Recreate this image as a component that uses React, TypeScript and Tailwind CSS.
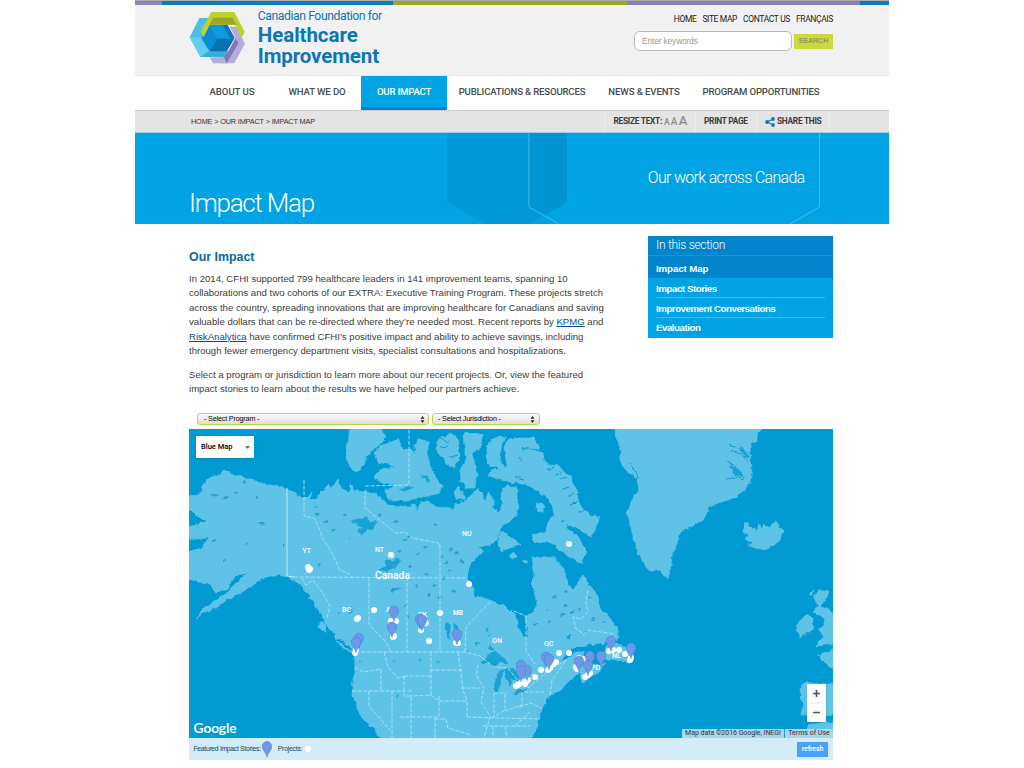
import React from "react";

const land = [
  "189,497 196,496 202,492 201,485 211,477 219,475 224,470 231,474 241,477 252,480 266,484 276,485 286,489 296,493 304,498 309,495 312,492 309,500 316,498 322,491 329,484 331,490 338,479 342,488 349,492 351,484 354,491 366,490 371,494 376,493 382,500 389,505 402,507 415,505 417,514 420,503 427,501 437,507 450,508 455,511 455,503 460,505 463,500 472,495 477,489 482,492 485,503 488,493 493,497 493,507 498,514 503,503 501,497 503,488 508,486 517,488 517,498 519,508 515,517 510,522 502,525 500,530 497,540 490,545 478,547 483,550 480,555 472,562 468,572 467,578 472,587 475,597 490,600 507,607 515,615 517,623 523,637 528,637 527,627 525,618 533,613 537,605 535,595 532,585 535,575 532,558 543,557 555,558 563,568 567,582 572,590 578,585 582,577 584,574 587,582 592,588 597,597 600,607 608,617 617,627 619,637 612,641 600,643 587,645 573,647 567,653 560,662 567,659 577,653 583,653 585,661 591,664 601,665 607,662 602,669 587,680 582,682 580,673 570,680 563,687 550,695 542,708 539,715 538,725 527,745 384,745 376,730 362,718 354,700 352,687 355,667 354,653 349,645 336,638 329,627 321,615 314,603 306,592 299,583 287,577 279,575 266,577 256,583 246,589 238,594 225,601 218,607 207,611 195,619 207,606 218,599 228,592 239,581 248,572 235,577 226,590 216,592 209,583 199,582 183,577 183,553 202,548 209,538 183,540 183,528 196,525 207,522 196,515 183,502",
  "351,422 346,458 350,466 356,472 364,465 368,454 378,446 386,438 380,422",
  "389,443 382,445 374,453 378,462 388,464 396,467 380,470 374,478 384,484 396,484 386,489 387,498 394,501 409,500 420,498 440,493 443,487 435,475 428,462 428,442 420,438 415,444 415,455 411,449 403,449 398,439",
  "436,445 443,437 450,433 458,438 460,455 455,468 450,466 443,458 436,449",
  "463,433 483,434 480,448 472,453 474,461 477,475 475,488 466,488 461,481 460,470 467,458 464,445",
  "491,441 498,436 506,437 501,448 500,462 505,468 507,462 504,448 507,441 513,438 521,439 523,450 533,450 542,453 549,465 559,466 564,471 569,476 573,483 577,489 578,500 582,508 588,512 591,516 599,518 596,528 591,537 580,530 567,524 566,528 575,534 585,548 586,554 581,563 570,558 561,551 550,542 535,542 532,535 546,532 548,522 554,515 552,505 545,496 533,488 523,483 508,482 497,479 488,475 491,470 500,469 488,464 486,455 488,445",
  "522,438 534,438 539,449 525,448 521,443",
  "454,492 459,486 464,498 457,500",
  "500,533 507,533 512,539 521,545 510,547 502,552 498,546",
  "536,505 541,502 545,507 542,513 537,511",
  "510,555 515,553 517,557 512,559",
  "524,559 527,560 527,564 524,563",
  "614,420 765,420 762,429 757,434 757,440 750,445 751,478 750,483 742,492 733,498 720,503 710,507 702,520 690,528 680,532 677,544 672,555 671,565 668,579 663,575 659,569 653,571 647,570 638,552 633,535 627,515 632,500 639,490 637,478 627,471 622,465 620,450",
  "743,532 746,522 751,527 756,530 758,524 761,529 765,524 769,528 771,524 777,522 783,532 778,543 765,550 757,548 748,546 752,541 745,539 750,535",
  "797,632 799,621 807,613 813,618 812,630 800,637",
  "818,590 829,590 825,600 821,607 829,609 840,623 840,643 817,646 819,641 824,637 818,628 824,626 824,618 814,611 819,605 813,598",
  "818,655 840,648 840,674 828,665",
  "802,685 806,683 840,685 840,714 820,717 802,714 804,704 800,698",
  "810,725 820,722 840,724 840,745 800,745",
  "603,652 608,647 607,641 613,639 619,645 630,649 634,657 629,664 623,660 616,661 605,658",
  "319,621 326,624 325,632 319,628",
  "336,641 344,645 350,651 343,648",
  "810,593 813,590 811,597",
];

const lakes = [
  "349,522 356,520 362,519 367,516 369,522 377,521 373,528 367,530 363,535 358,533 362,526",
  "379,571 386,566 386,559 392,562 398,557 400,562 392,569 384,572",
  "445,625 448,621 452,628 449,635 451,641 447,637",
  "453,622 457,626 458,636 462,643 458,645 455,636",
  "480,663 486,658 488,654 495,652 506,658 507,664 500,662 494,666 489,663",
  "494,685 497,674 506,669 501,677 499,692 495,693",
  "504,669 514,668 519,676 519,682 512,679 510,687 507,681",
  "512,693 519,690 528,688 522,693 514,695",
  "390,590 396,587 401,588 394,592",
  "488,648 492,646 494,650 491,651",
  "566,637 570,634 571,640",
  "398,489 409,486 415,488 403,492",
  "420,474 431,480 427,483",
  "728,465 738,468 745,478 736,476",
  "740,446 748,452 750,460 743,454",
];

const lakeSpots = [
  [214, 495, 8], [225, 497, 7], [236, 492, 4], [262, 523, 12], [256, 497, 3], [246, 543, 3],
  [224, 559, 4], [244, 481, 3], [284, 545, 3], [214, 540, 4], [315, 508, 4], [317, 514, 5],
  [326, 521, 4], [334, 530, 6], [345, 514, 5], [350, 538, 3], [318, 564, 3], [381, 515, 5],
  [396, 520, 6], [409, 537, 4], [400, 551, 4], [405, 540, 5], [417, 553, 4], [410, 566, 4],
  [426, 547, 4], [436, 524, 3], [442, 556, 4], [451, 549, 5], [446, 563, 5], [456, 553, 4],
  [426, 573, 5], [434, 585, 5], [444, 578, 4], [454, 591, 5], [416, 586, 4], [405, 605, 3],
  [439, 596, 5], [429, 594, 4], [450, 571, 3], [462, 561, 3], [408, 617, 4], [340, 612, 4],
  [350, 611, 5], [394, 660, 3], [397, 695, 3], [420, 660, 3], [438, 661, 3], [490, 635, 4],
  [468, 651, 4], [477, 643, 5], [487, 629, 4], [536, 623, 5], [549, 621, 4], [562, 614, 7],
  [579, 609, 4], [566, 605, 4], [555, 597, 4], [548, 610, 3], [593, 618, 5], [603, 621, 4],
  [566, 591, 3], [590, 597, 4], [354, 660, 4], [359, 661, 3], [572, 612, 5], [586, 631, 4],
  [562, 521, 5],
];

const borders = [
  "304,480 304,516 314,518 319,528 323,539 331,551 340,570 349,574 353,578",
  "294,577 467,578",
  "369,577 369,624 376,632 386,642 391,652",
  "407,577 407,652",
  "440,545 440,652",
  "465,652 466,627 490,602",
  "350,652 465,652 480,656 494,667 508,668 519,682 528,688 540,678 550,670 558,665 566,660",
  "365,486 409,485 409,429",
  "365,490 365,508 396,533 405,532 412,538 438,543 440,548",
  "302,578 306,585 313,580 322,592 330,606 327,618",
  "514,611 526,616 526,651 535,664",
  "355,667 363,672 381,669 381,690",
  "384,652 388,667 398,678 407,676",
  "352,691 412,691",
  "369,691 369,706 390,730",
  "392,691 392,738",
  "404,676 404,696 411,696 411,738",
  "404,676 430,676",
  "431,652 431,695 410,696",
  "430,670 462,670",
  "430,695 439,701 467,701 467,717",
  "439,696 439,717 400,717",
  "458,652 461,673 463,690 467,701",
  "461,688 480,688",
  "435,717 435,738",
  "435,719 446,719 448,728 471,735",
  "467,717 540,719",
  "478,665 476,675 484,688 481,702 490,716 484,738",
  "494,693 494,717",
  "494,693 507,693",
  "505,694 505,710 492,718",
  "522,692 522,705 505,711",
  "524,692 544,692",
  "519,707 531,703 541,708",
  "483,726 530,726",
  "493,726 493,738",
  "505,726 507,738",
  "515,726 530,712",
  "550,695 552,680 562,666 567,659",
  "588,590 586,602 588,612 581,619 573,617 576,629 584,634 587,630 615,634",
];

const projects = [
  [308, 567], [310, 569], [309, 570], [391, 555], [469, 584], [569, 544], [357, 619], [358, 618],
  [374, 610], [356, 650], [355, 653], [391, 621], [394, 621], [396, 621], [393, 637], [394, 636],
  [421, 630], [426, 623], [429, 641], [440, 613], [456, 643], [458, 643], [541, 670], [535, 677],
  [548, 670], [550, 668], [553, 664], [556, 662], [559, 653], [569, 653], [516, 686], [519, 684],
  [522, 682], [526, 682], [528, 680], [518, 685], [525, 684], [579, 658], [576, 667], [577, 669],
  [585, 677], [588, 675], [590, 673], [583, 659], [609, 651], [613, 650], [619, 650], [625, 654],
  [630, 660], [631, 658],
];

const pins = [
  [359, 639], [356, 643], [394, 612], [392, 628], [420, 620], [422, 621], [457, 635], [521, 666],
  [527, 671], [521, 672], [546, 658], [549, 660], [590, 657], [579, 662], [588, 666], [601, 657],
  [611, 642], [631, 649],
];

const labels: [number, number, string, number][] = [
  [302.5, 552.5, "YT", 8.5], [375, 551.5, "NT", 9], [462, 535.5, "NU", 9.5], [342, 612, "BC", 9],
  [386, 612, "AB", 9], [418, 617, "SK", 9], [453, 614.5, "MB", 10], [492, 642.5, "ON", 10],
  [544, 645.5, "QC", 9.5], [612, 658, "NL", 9], [592, 670, "PEI", 8],
];

function Logo() {
  return (
    <svg viewBox="160 30 175 165" className="h-[55px] w-[58.3px] shrink-0">
      <polygon points="165,112 194,54 224,54 203,112 222,152 282,152 270,171 197,171" fill="#4cbfe8" />
      <polygon points="165,112 197,112 222,154 197,171" fill="#62cdf0" />
      <polygon points="222,154 282,154 270,171 197,171" fill="#35afdc" />
      <polygon points="225,172 268,172 282,190 235,190" fill="#b5add9" />
      <polygon points="201,114 224,74 278,74 300,114 276,154 224,154" fill="#1594da" />
      <polygon points="224,80 249,116 226,154 201,114" fill="#0c8bd0" />
      <polygon points="224,74 278,74 298,116 249,116" fill="#109ade" />
      <polygon points="249,116 298,116 276,154 226,154" fill="#0b70b2" />
      <polygon points="264,74 278,74 300,114 286,116" fill="#0b78bd" />
      <polygon points="285,80 306,80 331,131 299,190 258,190 258,171 270,171 303,114" fill="#b5add9" />
      <polygon points="282,154 303,114 311,130 276,190 268,171" fill="#8277b7" />
      <polygon points="230,36 299,36 330,95 321,113 301,74 225,74 207,112 198,94" fill="#bdd02e" />
      <polygon points="235,53 294,53 306,74 225,74" fill="#9aa821" />
    </svg>
  );
}

function Pin({ x, y }: { x: number; y: number }) {
  return (
    <path
      transform={`translate(${x} ${y})`}
      d="M0 9.600C-.7 5-4.700 3-4.700-1.200a4.700 4.700 0 0 1 9.400 0C4.700 3 .7 5 0 9.600Z"
      fill="#6b98e8"
      stroke="#5580cc"
      strokeWidth=".6"
    />
  );
}

function ImpactMap() {
  return (
    <svg viewBox="189 429 644 309" className="block h-[309px] w-[644px]">
      <defs>
        <filter id="coast" filterUnits="userSpaceOnUse" x="183" y="423" width="656" height="321" colorInterpolationFilters="sRGB">
          <feTurbulence type="fractalNoise" baseFrequency=".16" numOctaves="3" seed="4" />
          <feDisplacementMap in="SourceGraphic" scale="5" xChannelSelector="R" yChannelSelector="G" />
        </filter>
      </defs>
      <rect x="189" y="429" width="644" height="309" fill="#019ad2" />
      <g filter="url(#coast)">
        {land.map((p) => <polygon key={p} points={p} fill="#5fc3e8" stroke="#5fc3e8" strokeWidth=".8" />)}
        {lakes.map((p) => <polygon key={p} points={p} fill="#1ba2d5" />)}
        {lakeSpots.map(([x, y, w]) => (
          <path key={`${x}-${y}`} d={`M${x - w / 2} ${y + 1}l${w / 2}-2 ${w / 2} 1-${w / 2} 2Z`} fill="#259fcc" />
        ))}
        <g fill="none" stroke="#1199cc" strokeWidth="1">
          <path d="M729 445l9 3 9 6M731 451l10 3 7 7M726 461l8 4 4 8M726 478l9-1 9 3M628 462l6 6 4 9M628 474l9 5" />
          <path d="M541 462l4-4M548 470l6-3M555 475l7-3M560 480l7-2M563 489l6-2M567 496l7-3M571 505l7-3M577 513l7-2" />
          <path d="M440 438l9 5M440 447l9-1M450 457l9-2M519 456l3 5M516 477l8 2" />
        </g>
      </g>
      <path d="M287 488V576L294 577" fill="none" stroke="#c4eaf8" strokeWidth="1" />
      <g fill="none" stroke="#ade2f5" strokeWidth=".9" strokeDasharray="4 1.6">
        {borders.map((p) => <polyline key={p} points={p} />)}
      </g>
      <g fill="white" className="font-['Roboto',sans-serif] font-medium">
        {labels.map(([x, y, t, w]) => (
          <text key={t} x={x} y={y} fontSize="7.500" textLength={w} lengthAdjust="spacingAndGlyphs">{t}</text>
        ))}
        <text x="375" y="578.5" fontSize="10" textLength="35" lengthAdjust="spacingAndGlyphs">Canada</text>
      </g>
      {projects.map(([x, y]) => <circle key={`${x}-${y}`} cx={x} cy={y} r="3" fill="white" />)}
      {pins.map(([x, y]) => <Pin key={`${x}-${y}`} x={x} y={y} />)}
      <text x="193.500" y="733" fontSize="14" fill="white" stroke="white" strokeWidth=".2" textLength="43" lengthAdjust="spacingAndGlyphs" className="font-['Lato',sans-serif] font-medium">Google</text>
    </svg>
  );
}

function Arrows() {
  return (
    <svg viewBox="0 0 5 8" className="h-[7px] w-[5px]">
      <path d="M2.5 0 4.7 3.2H.3ZM.3 4.8h4.4L2.5 8Z" fill="#222" />
    </svg>
  );
}

const nav = [
  { t: "ABOUT US", c: "w-[78px]", x: "tracking-[-0.05px]" },
  { t: "WHAT WE DO", c: "w-[92px] mr-[-2px]", x: "tracking-[-0.1px]" },
  { t: "OUR IMPACT", c: "w-[86px] bg-[#00a4e4] text-white border-b-[3px] border-[#0084c8] pt-[3px]", x: "tracking-[-0.2px]" },
  { t: "PUBLICATIONS & RESOURCES", c: "w-[150px]", x: "tracking-[-0.17px]" },
  { t: "NEWS & EVENTS", c: "w-[94px]", x: "tracking-[-0.1px]" },
  { t: "PROGRAM OPPORTUNITIES", c: "w-[140px]", x: "tracking-[-0.2px]" },
];

export default function App() {
  return (
    <div className="h-[768px] w-[1024px] overflow-hidden bg-white font-['Liberation_Sans',Arial,sans-serif] text-[#3c3c3c]">
      <div className="ml-[135px] w-[754px]">
        <div className="flex h-[5px] border-t border-[#aaa]">
          <div className="w-[27px] bg-[#8e81bd]" />
          <div className="w-[231px] bg-[#0c7dbb]" />
          <div className="w-[234px] bg-[#9aa81f]" />
          <div className="w-[233px] bg-[#8580b8]" />
          <div className="w-[29px] bg-[#0c7dbb]" />
        </div>
        <header className="flex h-[71px] border-b border-[#e5e5e5] bg-[#f1f1f1] font-['Roboto',sans-serif]">
          <div className="flex pl-[53px] pt-[5px]">
            <Logo />
            <div className="ml-[11.500px] whitespace-nowrap text-[#0d76b3]">
              <div className="text-[12.200px] leading-[13px] tracking-[-0.42px]">Canadian Foundation for</div>
              <div className="mt-[2px] text-[20.5px] font-bold leading-[21px] tracking-[-0.05px]">Healthcare</div>
              <div className="text-[20.5px] font-bold leading-[20px] tracking-[-0.12px]">Improvement</div>
            </div>
          </div>
          <div className="ml-auto mr-[56px] flex flex-col items-end">
            <div className="flex gap-[6px] pt-[8px] text-[8.5px] leading-[12px] tracking-[-0.37px] text-[#222]">
              <span>HOME</span><span>SITE MAP</span><span>CONTACT US</span><span>FRANÇAIS</span>
            </div>
            <div className="mt-[6px] flex items-center gap-[2px] font-['Liberation_Sans',Arial,sans-serif]">
              <div className="flex h-[20px] w-[158px] items-center rounded-[6px] border border-[#b8b8b8] bg-white pl-[7px] text-[8.3px] tracking-[-0.1px] text-[#999]">Enter keywords</div>
              <div className="flex h-[15px] w-[39px] items-center justify-center bg-[#cdd93b] text-[7.1px] font-bold tracking-[-0.1px] text-[#8f9a58]">SEARCH</div>
            </div>
          </div>
        </header>
        <nav className="flex h-[34px] bg-white pl-[58px] font-['Roboto',sans-serif] text-[9.6px] font-medium text-[#4a4a4a]">
          {nav.map((n) => (
            <div key={n.t} className={`flex shrink-0 items-center justify-center whitespace-nowrap pb-[2px] ${n.c} ${n.x}`}>{n.t}</div>
          ))}
        </nav>
        <div className="flex h-[23px] items-center border-b border-t border-b-[#9bd3ea] border-t-[#ccc] bg-[#e4e4e4] pl-[56px] font-['Roboto',sans-serif] text-[7.3px] text-[#333]">
          <span className="whitespace-nowrap pt-px font-['Liberation_Sans',Arial,sans-serif] tracking-[-0.15px]">HOME &gt; OUR IMPACT &gt; IMPACT MAP</span>
          <div className="ml-auto mr-[59px] flex h-full items-center text-[8.4px] font-bold tracking-[-0.3px] text-[#3c3c3c]">
            <div className="flex h-full w-[91px] items-center whitespace-nowrap border-l border-[#ededed] pl-[8.500px]">
              RESIZE TEXT:
              <span className="ml-[2px] flex items-baseline gap-[1.500px] font-medium leading-[12px] text-[#8e8e8e]">
                <span className="text-[8.500px]">A</span><span className="text-[10px]">A</span><span className="text-[13px]">A</span>
              </span>
            </div>
            <div className="flex h-full w-[61px] items-center whitespace-nowrap border-l border-[#ededed] pl-[8px]">PRINT PAGE</div>
            <div className="flex h-full w-[74px] items-center gap-[2px] whitespace-nowrap border-x border-[#ededed] pl-[8px]">
              <svg viewBox="0 0 10 10" className="h-[10px] w-[10px]">
                <path d="M8 2 2.3 5 8 8" fill="none" stroke="#0c7dbb" strokeWidth="1.2" />
                <circle cx="8" cy="2" r="1.9" fill="#0c7dbb" /><circle cx="2.1" cy="5" r="2" fill="#0c7dbb" /><circle cx="8" cy="8" r="1.9" fill="#0c7dbb" />
              </svg>
              SHARE THIS
            </div>
          </div>
        </div>
        <div className="relative h-[91px] bg-[#00a4e4] font-['Roboto',sans-serif] font-light text-white">
          <svg viewBox="135 133 754 91" className="absolute inset-0 h-full w-full">
            <polygon points="447,133 567,133 567,202 529,224 485,224 447,202" fill="#0098d8" />
            <polygon points="529,133 567,133 567,202 545,215 529,207" fill="#0094d3" />
            <path d="M529 133V207L559 224M819.500 133V207L790 224" fill="none" stroke="#55bde9" strokeWidth=".9" />
          </svg>
          <div className="relative flex h-full items-start whitespace-nowrap pl-[54px]">
            <h1 className="mt-[55px] text-[26px] leading-[30px] tracking-[-1.25px]">Impact Map</h1>
            <p className="ml-auto mr-[84.500px] mt-[35px] text-[16px] leading-[19px] tracking-[-0.7px]">Our work across Canada</p>
          </div>
        </div>
        <div className="flex h-[189px] pl-[54px]">
          <main className="w-[459px] whitespace-nowrap text-[9.6px] leading-[14.4px]">
            <h2 className="mb-[7px] mt-[25px] text-[12.4px] font-bold leading-[16px] text-[#0867a5]">Our Impact</h2>
            <p>
              In 2014, CFHI supported 799 healthcare leaders in 141 improvement teams, spanning 10<br />
              collaborations and two cohorts of our EXTRA: Executive Training Program. These projects stretch<br />
              across the country, spreading innovations that are improving healthcare for Canadians and saving<br />
              valuable dollars that can be re-directed where they’re needed most. Recent reports by <a className="text-[#074f80] underline">KPMG</a> and<br />
              <a className="text-[#074f80] underline">RiskAnalytica</a> have confirmed CFHI’s positive impact and ability to achieve savings, including<br />
              through fewer emergency department visits, specialist consultations and hospitalizations.
            </p>
            <p className="mt-[9.600px]">
              Select a program or jurisdiction to learn more about our recent projects. Or, view the featured<br />
              impact stories to learn about the results we have helped our partners achieve.
            </p>
          </main>
          <aside className="mt-[12px] h-[102px] w-[185px] whitespace-nowrap bg-[#00a4e4] text-[9.7px] font-bold text-white">
            <div className="h-[20px] border-b border-[#1a94d4] bg-[#0084cc] pl-[8px] font-['Roboto',sans-serif] text-[12px] font-light leading-[19px] tracking-[-0.28px]">In this section</div>
            <div className="h-[22px] bg-[#0084cc] pl-[8px] leading-[26px] tracking-[-0.1px]">Impact Map</div>
            <div className="mx-[8px] h-[20px] border-b border-[#42b9ec] leading-[22px] tracking-[-0.43px]">Impact Stories</div>
            <div className="mx-[8px] h-[20px] border-b border-[#42b9ec] leading-[21px] tracking-[-0.46px]">Improvement Conversations</div>
            <div className="mx-[8px] h-[20px] leading-[20px] tracking-[-0.46px]">Evaluation</div>
          </aside>
        </div>
        <div className="flex h-[16px] gap-[3px] pl-[62px] text-[7.2px] tracking-[-0.17px] text-black">
          <div className="flex h-[12px] w-[232px] items-center justify-between rounded-[3px] border border-[#c4d33c] bg-gradient-to-b from-[#fafafa] to-[#dedede] pl-[6px] pr-[3px]">- Select Program -<Arrows /></div>
          <div className="flex h-[12px] w-[108px] items-center justify-between rounded-[3px] border border-[#c4d33c] bg-gradient-to-b from-[#fafafa] to-[#dedede] pl-[5px] pr-[4px]">- Select Jurisdiction -<Arrows /></div>
        </div>
        <section className="ml-[54px] w-[644px]">
          <div className="relative">
            <ImpactMap />
            <div className="absolute left-[7px] top-[7px] flex h-[22px] w-[58px] items-center justify-between rounded-[1px] bg-white pl-[5px] pr-[4px] font-['Roboto',sans-serif] text-[7.5px] font-medium text-black shadow">
              Blue Map
              <svg viewBox="0 0 6 3" className="h-[3px] w-[5px]"><path d="M0 0h6L3 3Z" fill="#555" /></svg>
            </div>
            <div className="absolute bottom-[16px] right-[7px] flex h-[38px] w-[19px] flex-col items-center rounded-[1px] bg-white shadow">
              <svg viewBox="0 0 19 38" className="h-full w-full"><path d="M6 9.500h7M9.500 6v7M6 28.500h7" stroke="#555" strokeWidth="1.700" /><path d="M3 19h13" stroke="#ddd" strokeWidth=".8" /></svg>
            </div>
            <div className="absolute bottom-0 right-0 flex h-[9px] whitespace-nowrap font-['Roboto',sans-serif] text-[7px] leading-[9px] text-[#333]">
              <span className="w-[103px] border-r border-[#2b9fd0] bg-[#a9d5e9] text-center tracking-[-0.04px]">Map data ©2016 Google, INEGI</span>
              <span className="w-[48px] bg-[#a9d5e9] text-center">Terms of Use</span>
            </div>
          </div>
          <div className="flex h-[22px] items-center bg-[#d2edf9] pl-[4.500px] pr-[5px] text-[6.8px] tracking-[-0.3px] text-[#123f66]">
            <span className="whitespace-nowrap">Featured Impact Stories:</span>
            <svg viewBox="-5 -6 10 16" className="ml-px h-[17px] w-[10px]"><Pin x={0} y={0} /></svg>
            <span className="ml-[6px] tracking-[-0.2px]">Projects:</span>
            <span className="ml-[3px] h-[6px] w-[6px] rounded-full bg-white" />
            <div className="ml-auto flex h-[15px] w-[31px] items-center justify-center bg-[#4da1f4] font-['Roboto',sans-serif] text-[7px] font-medium tracking-[-0.1px] text-white">refresh</div>
          </div>
        </section>
      </div>
    </div>
  );
}
